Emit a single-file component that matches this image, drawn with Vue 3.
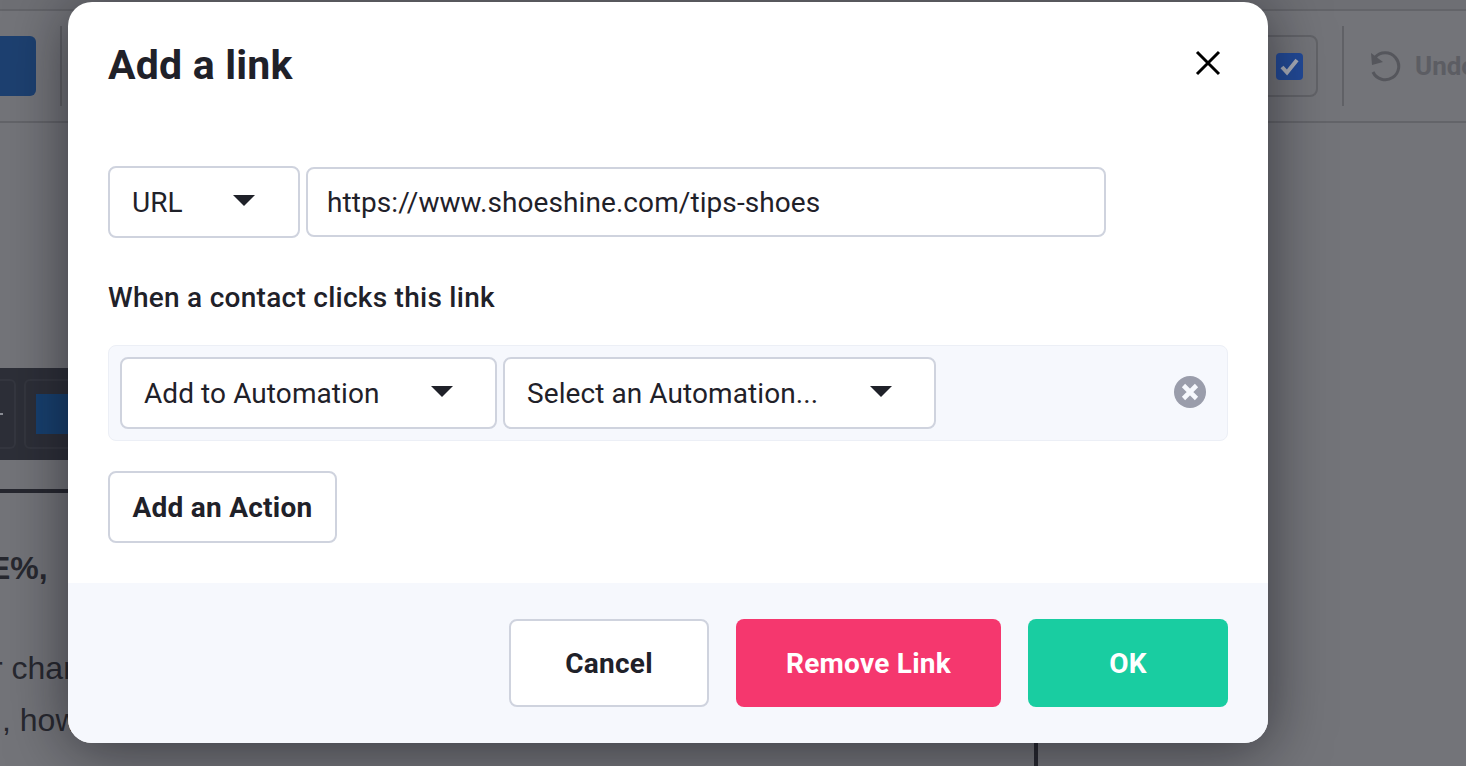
<script setup>
const bg = ['E%,', 'r char', ', how']
</script>

<template>
  <div class="page">
    <div class="strip"></div>
    <div class="toolbar">
      <div class="tool-left">
        <div class="blue-btn"></div>
        <div class="divider"></div>
      </div>
      <div class="tool-right">
        <div class="check-box">
          <span class="check">
            <svg width="27" height="27" viewBox="0 0 27 27"><path d="M6 14l5 5.5L21 7" fill="none" stroke="#a9adb8" stroke-width="4"/></svg>
          </span>
        </div>
        <div class="divider"></div>
        <svg class="undo" width="34" height="34" viewBox="0 0 34 34">
          <path d="M8 8.5A13.5 13.5 0 1 1 6 23" fill="none" stroke="#55565c" stroke-width="3"/>
          <path d="M4 4l1 12 11-3z" fill="#55565c"/>
        </svg>
        <span class="undo-text">Undo</span>
      </div>
    </div>

    <div class="canvas">
      <div class="left-col">
        <div class="band">
          <div class="band-btn"><i class="tick"></i></div>
          <div class="band-btn wide"><span class="band-blue"></span></div>
        </div>
        <div class="rule"></div>
        <p class="bg-text bold">{{ bg[0] }}</p>
        <p class="bg-text l2">{{ bg[1] }}</p>
        <p class="bg-text l3">{{ bg[2] }}</p>
      </div>
    </div>

    <div class="modal">
      <div class="body">
        <div class="head">
          <h1>Add a link</h1>
          <svg class="close" width="26" height="26" viewBox="0 0 26 26"><path d="M2 2l22 22M24 2L2 24" stroke="#000" stroke-width="3" fill="none"/></svg>
        </div>

        <div class="url-row">
          <div class="select url-type"><span>URL</span><i class="caret"></i></div>
          <div class="input">https://www.shoeshine.com/tips-shoes</div>
        </div>

        <div class="label">When a contact clicks this link</div>

        <div class="action-row">
          <div class="select act"><span>Add to Automation</span><i class="caret"></i></div>
          <div class="select auto"><span>Select an Automation...</span><i class="caret"></i></div>
          <svg class="remove" width="32" height="32" viewBox="0 0 32 32">
            <circle cx="16" cy="16" r="16" fill="#9a9dab"/>
            <path d="M9.5 9.5l13 13M22.5 9.5l-13 13" stroke="#f6f8fd" stroke-width="4.6" fill="none"/>
          </svg>
        </div>

        <div class="btn add">Add an Action</div>
      </div>

      <div class="foot">
        <div class="btn cancel">Cancel</div>
        <div class="btn danger">Remove Link</div>
        <div class="btn ok">OK</div>
      </div>
    </div>
  </div>
</template>

<style>
html, body { margin: 0; background: #727378; }
</style>

<style scoped>
.page {
  position: relative;
  width: 1466px;
  height: 766px;
  overflow: hidden;
  background: #737479;
  font-family: Roboto, "Noto Sans", sans-serif;
  color: #1f2129;
}
.strip { height: 9px; background: #6e6f74; border-bottom: 2px solid #636469; }
.toolbar {
  height: 110px;
  border-bottom: 2px solid #636469;
  display: flex;
  align-items: center;
  justify-content: space-between;
}
.tool-left, .tool-right { display: flex; align-items: center; }
.blue-btn { width: 36px; height: 60px; background: #1d4070; border-radius: 0 6px 6px 0; }
.tool-left .divider { margin-left: 24px; }
.divider { width: 2px; height: 80px; background: #606166; }
.tool-right { width: 300px; flex: none; margin-right: -84px; }
.check-box {
  width: 101px; height: 58px; margin-left: -50px;
  border: 2px solid #626368; border-radius: 8px;
  display: flex; align-items: center; justify-content: flex-end; padding-right: 13px;
  flex: none;
}
.check { width: 27px; height: 27px; background: #224a97; border-radius: 4px; display: block; }
.tool-right .divider { margin-left: 24px; flex: none; }
.undo { margin-left: 23px; flex: none; }
.undo-text {
  margin-left: 14px; font-size: 26px; font-weight: 700; color: #5c5d63; white-space: nowrap;
}
.canvas { display: flex; height: 644px; }
.left-col {
  width: 1034px;
  border-right: 4px solid #26272f;
  padding-top: 245px;
  box-sizing: content-box;
}
.band {
  height: 92px; background: #2d2f38;
  display: flex; align-items: center; gap: 8px;
}
.band-btn {
  width: 14px; height: 66px; border: 2px solid #34363f; border-left: 0;
  border-radius: 0 6px 6px 0;
  display: flex; align-items: center;
}
.band-btn.wide {
  width: 120px; border-left: 2px solid #34363f; border-radius: 6px;
  padding-left: 10px;
}
.tick { width: 3px; height: 2px; background: #8a8c94; display: block; }
.band-blue { width: 60px; height: 40px; background: #17406f; display: block; }
.rule { height: 4px; background: #26272f; margin-top: 29px; }
.bg-text {
  margin: 0; font-family: "Liberation Sans", Arial, sans-serif; font-size: 32px; line-height: 52px;
  color: #27282f; white-space: nowrap;
}
.bold { font-weight: 700; margin-top: 49px; margin-left: -11px; }
.l2 { margin-top: 48px; margin-left: -8px; }
.l3 { margin-left: 2px; }

.modal {
  position: absolute;
  left: 68px; top: 2px;
  width: 1200px; height: 741px;
  border-radius: 24px;
  background: #fff;
  overflow: hidden;
  box-shadow: 0 6px 60px rgba(10, 10, 16, .55);
  display: flex; flex-direction: column;
}
.body { flex: 1; padding: 0 40px; }
.head {
  height: 164px; display: flex; justify-content: space-between; align-items: flex-start;
}
h1 {
  margin: 38px 0 0; font-size: 41px; line-height: 50px; font-weight: 700; color: #1f2129; letter-spacing: .2px;
}
.close { margin: 48px 7px 0 0; }
.url-row { display: flex; align-items: center; gap: 6px; }
.select, .input {
  box-sizing: border-box;
  border: 2px solid #cfd3de;
  border-radius: 8px;
  background: #fff;
  font-size: 28px;
  letter-spacing: .08px;
  display: flex; align-items: center;
}
.select { height: 72px; padding: 0 42px 0 22px; justify-content: space-between; }
.url-type { width: 192px; padding-right: 43px; }
.input { width: 800px; height: 70px; padding-left: 19px; }
.caret {
  width: 0; height: 0; flex: none; margin-top: -3px;
  border-left: 11px solid transparent; border-right: 11px solid transparent; border-top: 11px solid #1f2129;
}
.label { margin-top: 40px; font-size: 28px; line-height: 40px; font-weight: 500; letter-spacing: .27px; }
.action-row {
  margin-top: 27px;
  box-sizing: border-box;
  height: 96px;
  padding: 0 21px 0 11px;
  display: flex; align-items: center; gap: 6px;
  background: #f6f8fd; border: 1px solid #eceff6; border-radius: 8px;
}
.act { width: 377px; }
.auto { width: 433px; }
.remove { margin-left: auto; margin-top: -2px; }
.btn {
  box-sizing: border-box; border-radius: 8px;
  display: flex; align-items: center; justify-content: center;
  font-size: 28px; font-weight: 700; letter-spacing: .25px;
}
.add {
  margin-top: 30px; width: 229px; height: 72px;
  border: 2px solid #cfd3de; background: #fff;
}
.foot {
  height: 160px; flex: none; background: #f6f8fd;
  padding: 0 40px; box-sizing: border-box;
  display: flex; justify-content: flex-end; align-items: center; gap: 27px;
}
.foot .btn { height: 88px; }
.cancel { width: 200px; border: 2px solid #cfd3de; background: #fff; }
.danger { width: 265px; background: #f5376e; color: #fff; }
.ok { width: 200px; background: #19cda1; color: #fff; }
</style>
